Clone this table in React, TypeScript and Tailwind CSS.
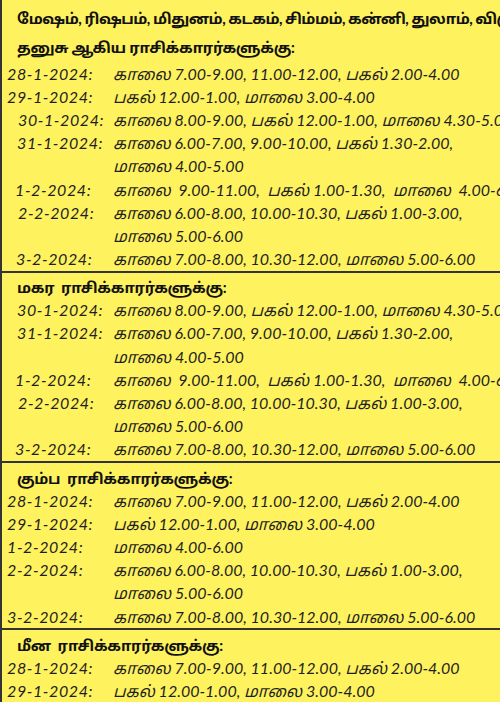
import React from "react";

type Row = { d: string; pl: string; t: string };

const s1: Row[] = [
  { d: "28-1-2024:", pl: "pl-[5px]", t: "காலை 7.00-9.00, 11.00-12.00, பகல் 2.00-4.00" },
  { d: "29-1-2024:", pl: "pl-[5px]", t: "பகல் 12.00-1.00, மாலை 3.00-4.00" },
  { d: "30-1-2024:", pl: "pl-[16px]", t: "காலை 8.00-9.00, பகல் 12.00-1.00, மாலை 4.30-5.00" },
  { d: "31-1-2024:", pl: "pl-[15px]", t: "காலை 6.00-7.00, 9.00-10.00, பகல் 1.30-2.00," },
  { d: "", pl: "pl-[5px]", t: "மாலை 4.00-5.00" },
  { d: "1-2-2024:", pl: "pl-[13px]", t: "காலை  9.00-11.00,  பகல் 1.00-1.30,  மாலை  4.00-6.00" },
  { d: "2-2-2024:", pl: "pl-[16px]", t: "காலை 6.00-8.00, 10.00-10.30, பகல் 1.00-3.00," },
  { d: "", pl: "pl-[5px]", t: "மாலை 5.00-6.00" },
  { d: "3-2-2024:", pl: "pl-[14px]", t: "காலை 7.00-8.00, 10.30-12.00, மாலை 5.00-6.00" },
];

const s2: Row[] = [
  { d: "30-1-2024:", pl: "pl-[15px]", t: "காலை 8.00-9.00, பகல் 12.00-1.00, மாலை 4.30-5.00" },
  { d: "31-1-2024:", pl: "pl-[15px]", t: "காலை 6.00-7.00, 9.00-10.00, பகல் 1.30-2.00," },
  { d: "", pl: "pl-[5px]", t: "மாலை 4.00-5.00" },
  { d: "1-2-2024:", pl: "pl-[13px]", t: "காலை  9.00-11.00,  பகல் 1.00-1.30,  மாலை  4.00-6.00" },
  { d: "2-2-2024:", pl: "pl-[16px]", t: "காலை 6.00-8.00, 10.00-10.30, பகல் 1.00-3.00," },
  { d: "", pl: "pl-[5px]", t: "மாலை 5.00-6.00" },
  { d: "3-2-2024:", pl: "pl-[13px]", t: "காலை 7.00-8.00, 10.30-12.00, மாலை 5.00-6.00" },
];

const s3: Row[] = [
  { d: "28-1-2024:", pl: "pl-[5px]", t: "காலை 7.00-9.00, 11.00-12.00, பகல் 2.00-4.00" },
  { d: "29-1-2024:", pl: "pl-[5px]", t: "பகல் 12.00-1.00, மாலை 3.00-4.00" },
  { d: "1-2-2024:", pl: "pl-[5px]", t: "மாலை 4.00-6.00" },
  { d: "2-2-2024:", pl: "pl-[5px]", t: "காலை 6.00-8.00, 10.00-10.30, பகல் 1.00-3.00," },
  { d: "", pl: "pl-[5px]", t: "மாலை 5.00-6.00" },
  { d: "3-2-2024:", pl: "pl-[5px]", t: "காலை 7.00-8.00, 10.30-12.00, மாலை 5.00-6.00" },
];

const s4: Row[] = [
  { d: "28-1-2024:", pl: "pl-[5px]", t: "காலை 7.00-9.00, 11.00-12.00, பகல் 2.00-4.00" },
  { d: "29-1-2024:", pl: "pl-[5px]", t: "பகல் 12.00-1.00, மாலை 3.00-4.00" },
];

const font = "font-['Lato','Noto_Sans_Tamil','Noto_Sans',sans-serif]";

function Rows({ rows }: { rows: Row[] }) {
  return (
    <div className="flex flex-col">
      {rows.map((r, i) => (
        <div key={i} className="flex h-[23.2px] items-center whitespace-pre italic text-[16px] text-[#1f1f1f]">
          <div className={`w-[111px] shrink-0 tracking-[0.6px] ${r.pl}`}>{r.d}</div>
          <div className="shrink-0">{r.t}</div>
        </div>
      ))}
    </div>
  );
}

function Header({ children }: { children: React.ReactNode }) {
  return (
    <div className="h-[22px] flex items-center pl-[15px] whitespace-pre font-bold text-[15px] tracking-[-0.3px] text-[#111]">
      {children}
    </div>
  );
}

export default function App() {
  return (
    <div className={`w-[500px] h-[702px] overflow-hidden bg-[#fef25e] border-l-2 border-[#333] ${font}`}>
      <div className="pt-[4px]">
        <div className="h-[29px] flex items-center pl-[15px] whitespace-nowrap font-bold text-[15px] tracking-[-0.5px] text-[#111]">
          மேஷம், ரிஷபம், மிதுனம், கடகம், சிம்மம், கன்னி, துலாம், விருச்சிகம்,
        </div>
        <div className="h-[29px] flex items-center pl-[15px] whitespace-pre font-bold text-[15px] tracking-[-0.3px] text-[#111]">
          தனுசு ஆகிய ராசிக்காரர்களுக்கு:
        </div>
        <Rows rows={s1} />
      </div>
      <div className="border-t-2 border-[#333] pt-[4px]">
        <Header>மகர  ராசிக்காரர்களுக்கு:</Header>
        <Rows rows={s2} />
      </div>
      <div className="border-t-2 border-[#333] pt-[4px]">
        <Header>கும்ப  ராசிக்காரர்களுக்கு:</Header>
        <Rows rows={s3} />
      </div>
      <div className="border-t-2 border-[#333] pt-[4px]">
        <Header>மீன  ராசிக்காரர்களுக்கு:</Header>
        <Rows rows={s4} />
      </div>
    </div>
  );
}
